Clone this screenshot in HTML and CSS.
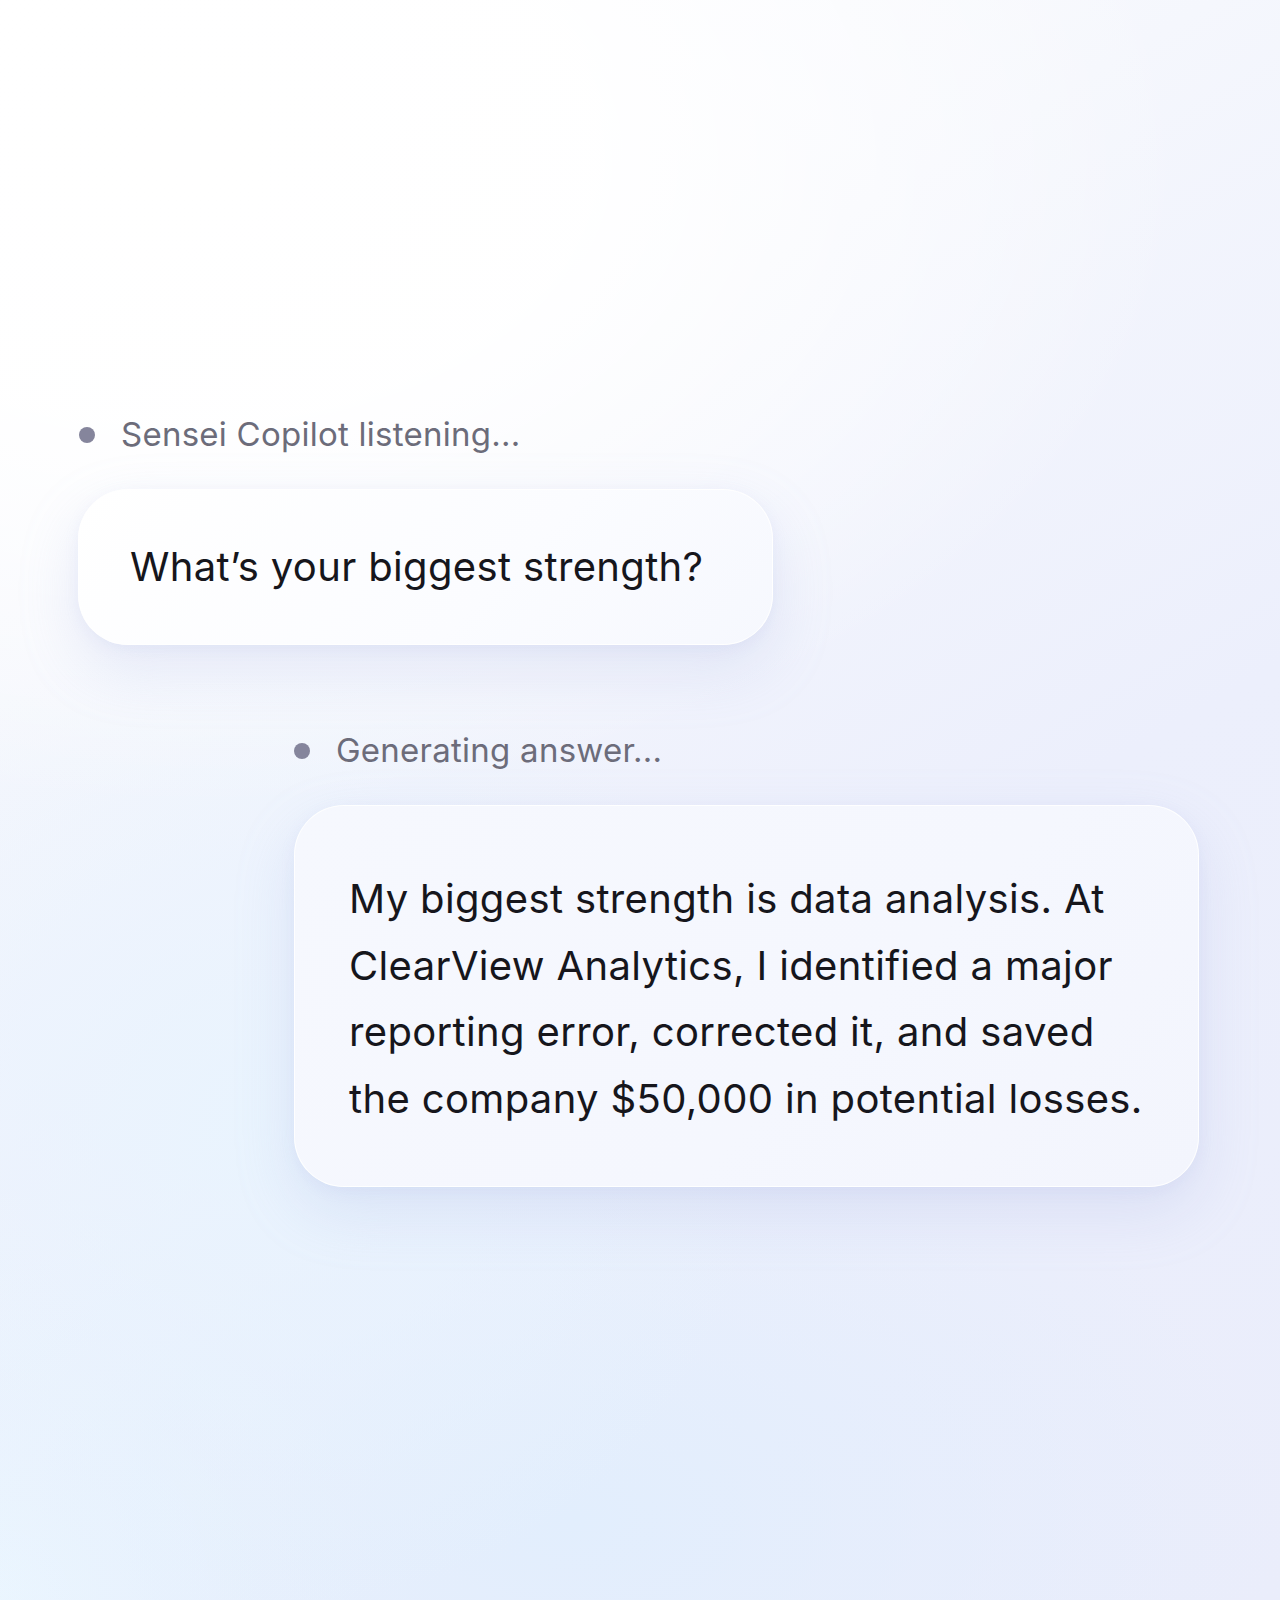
FILE: index.html
```html
<!DOCTYPE html>
<html lang="en">
<head>
<meta charset="utf-8">
<title>Sensei Copilot</title>
<link rel="stylesheet" href="styles.css">
</head>
<body>
<main class="stage">
  <section class="turn turn-question">
    <div class="status"><span class="dot"></span><span class="status-text">Sensei Copilot listening...</span></div>
    <div class="bubble bubble-question">What’s your biggest strength?</div>
  </section>
  <section class="turn turn-answer">
    <div class="status"><span class="dot"></span><span class="status-text">Generating answer...</span></div>
    <div class="bubble bubble-answer">My biggest strength is data analysis. At<br>ClearView Analytics, I identified a major<br>reporting error, corrected it, and saved<br>the company $50,000 in potential losses.</div>
  </section>
</main>
</body>
</html>
```
FILE: styles.css
```css
* { box-sizing: border-box; }
html, body { margin: 0; padding: 0; }
body {
  min-height: 1600px;
  font-family: Inter, "Noto Sans", sans-serif;
  color: #16161c;
  background:
    radial-gradient(ellipse 1000px 650px at 15% 10%, #ffffff 0%, rgba(255,255,255,0.95) 40%, rgba(255,255,255,0) 100%),
    radial-gradient(ellipse 520px 500px at 20% 70%, rgba(233,244,254,0.95) 0%, rgba(233,244,254,0) 100%),
    radial-gradient(ellipse 700px 420px at 45% 95%, rgba(226,238,253,1) 0%, rgba(226,238,253,0) 100%),
    radial-gradient(ellipse 420px 420px at 0% 100%, rgba(236,247,255,1) 0%, rgba(236,247,255,0) 100%),
    linear-gradient(150deg, #ffffff 0%, #f5f7fd 30%, #eceffc 60%, #eaedfb 100%);
}
.stage {
  padding-top: 414px;
  display: flex;
  flex-direction: column;
}
.turn { display: flex; flex-direction: column; align-items: flex-start; }
.turn-question { margin-left: 79px; }
.turn-answer { margin-left: 294px; margin-top: 85px; }
.status {
  display: flex;
  align-items: center;
  gap: 26px;
  height: 40px;
}
.dot {
  width: 16px;
  height: 16px;
  border-radius: 50%;
  background: #85859c;
  flex: none;
  margin-top: 1px;
}
.status-text {
  font-size: 33px;
  line-height: 40px;
  color: #6c6c7a;
  letter-spacing: 0.25px;
}
.bubble {
  margin-top: 35px;
  font-size: 40px;
  letter-spacing: 0.35px;
  border-radius: 50px;
  border: 1px solid rgba(255,255,255,0.9);
  box-shadow: 0 24px 60px rgba(160, 175, 225, 0.22), 0 4px 14px rgba(170, 185, 230, 0.12);
}
.bubble-question {
  margin-left: -1px;
  width: 695px;
  line-height: 48px;
  padding: 53px 40px 53px 51px;
  background: linear-gradient(135deg, #ffffff 0%, #fbfcff 60%, #f6f8fe 100%);
  white-space: nowrap;
}
.bubble-answer {
  width: 905px;
  line-height: 66.5px;
  padding: 60px 40px 54px 54px;
  background: linear-gradient(135deg, #f6f8fe 0%, #f5f7fe 60%, #f3f5fd 100%);
  white-space: nowrap;
}
```
